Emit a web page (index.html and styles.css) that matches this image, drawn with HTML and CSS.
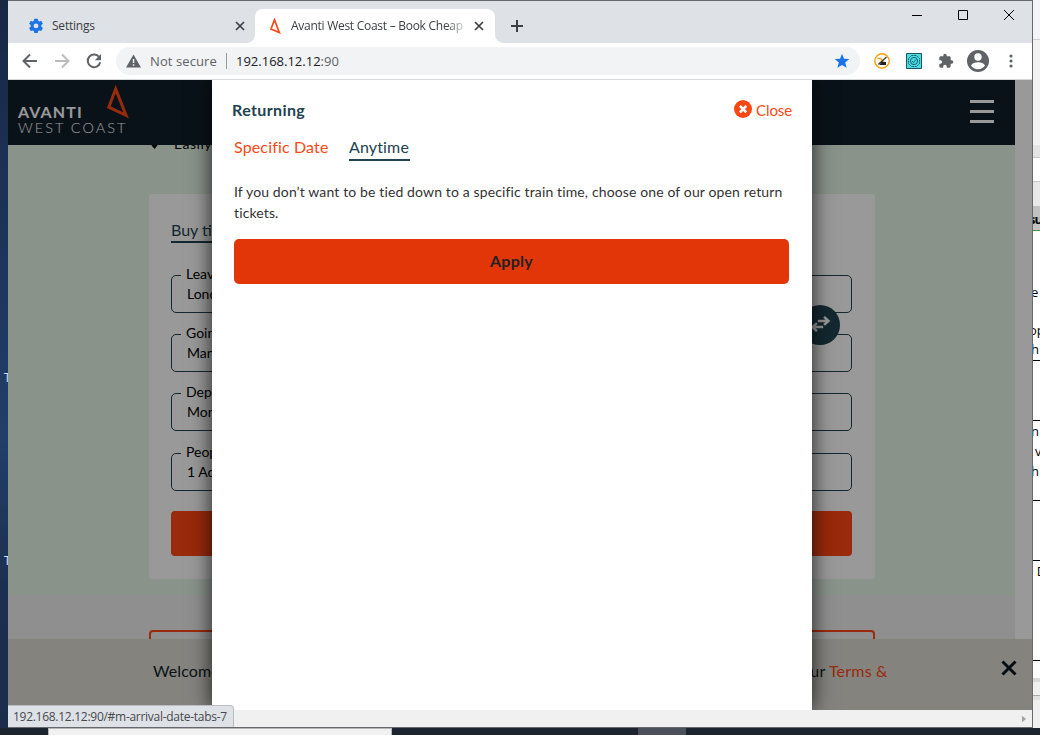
FILE: index.html
```
<!DOCTYPE html>
<html lang="en">
<head>
<meta charset="utf-8">
<title>Avanti West Coast – Book Cheap</title>
<link rel="stylesheet" href="styles.css">
</head>
<body>
<div class="desktop">
  <span class="shortcut shortcut-a">T</span>
  <span class="shortcut shortcut-b">T</span>

  <!-- Window partly visible behind the browser -->
  <div class="back-window">
    <div class="bw-title"></div>
    <div class="bw-tools"></div>
    <div class="bw-gap"></div>
    <div class="bw-field"></div>
    <div class="bw-ruler"></div>
    <div class="bw-head"><span>su</span></div>
    <div class="bw-doc">
      <div class="bw-row r1"><span class="w1">e</span><span class="w2">op</span><span class="w3">h</span></div>
      <div class="bw-row r2"></div>
      <div class="bw-row r3"><span class="w4">n</span><span class="w5">v</span><span class="w6">h</span></div>
      <div class="bw-row r4"></div>
      <div class="bw-row r5"><span class="w7">e D</span></div>
    </div>
    <div class="bw-scroll"></div>
    <div class="bw-status"></div>
  </div>

  <div class="taskbar"><div class="task-window"></div><div class="task-item"></div></div>

  <div class="browser">
    <div class="tabstrip">
      <div class="tab tab-idle">
        <svg class="favicon" viewBox="0 0 16 16"><path fill="#1a73e8" d="M6.300.7h3.400l.5 2.100 1 .6 2-.7 1.700 3-1.600 1.400v1.600l1.600 1.400-1.700 3-2-.7-1 .6-.5 2.100H6.300l-.5-2.100-1-.6-2 .7-1.700-3 1.600-1.400V7.100L1.100 5.700l1.700-3 2 .7 1-.6z"/><circle cx="8" cy="7.900" r="2.400" fill="#dee1e6"/></svg>
        <span class="tab-title t-settings">Settings</span>
        <svg class="tab-x" viewBox="0 0 10 10"><path d="M1 1l8 8M9 1L1 9"/></svg>
      </div>
      <div class="tab tab-active">
        <svg class="favicon" viewBox="0 0 16 16"><path d="M7.500 1.800L4 11l8.300 3.500z" fill="none" stroke="#ff4713" stroke-width="1.700"/></svg>
        <span class="tab-title t-avanti">Avanti West Coast – Book Cheap</span>
        <svg class="tab-x" viewBox="0 0 10 10"><path d="M1 1l8 8M9 1L1 9"/></svg>
      </div>
      <svg class="new-tab" viewBox="0 0 12 12"><path d="M6 0v12M0 6h12"/></svg>
      <div class="win-controls">
        <svg viewBox="0 0 10 10"><path d="M0 5.500h10"/></svg>
        <svg viewBox="0 0 10 10"><path d="M.5.5h9v9h-9z"/></svg>
        <svg viewBox="0 0 10 10"><path d="M0 0l10 10M10 0L0 10"/></svg>
      </div>
    </div>

    <div class="toolbar">
      <svg class="nav" viewBox="0 0 16 16"><path d="M15 8H2M8 1.500L1.500 8 8 14.500"/></svg>
      <svg class="nav nav-off" viewBox="0 0 16 16"><path d="M1 8h13M8 1.500L14.500 8 8 14.500"/></svg>
      <svg class="nav" viewBox="0 0 16 16"><path d="M13.400 4.500A6.300 6.300 0 1 0 14.200 9.200"/><path class="solid" d="M15 1v6.200H8.800z"/></svg>
      <div class="omnibox">
        <svg class="warn" viewBox="0 0 15 14"><path fill="#5f6368" d="M7.500.5L15 13.500H0z"/><path fill="#f1f3f4" d="M6.800 5h1.500v4H6.800zM6.800 10.200h1.500v1.500H6.800z"/></svg>
        <span class="insecure">Not secure</span>
        <span class="sep"></span>
        <span class="url">192.168.12.12<i>:90</i></span>
        <svg class="star" viewBox="0 0 16 16"><path fill="#1a73e8" d="M8 .8l2 5 5.300.3-4.100 3.400 1.400 5.200L8 11.900l-4.600 2.800 1.400-5.200L.7 6.100 6 5.800z"/></svg>
      </div>
      <svg class="ext e1" viewBox="0 0 16 16"><circle cx="8" cy="8" r="7.200" fill="#fff" stroke="#ff9f0a" stroke-width="1.400"/><path d="M3.500 5.500h3l2 2-4 3.500" fill="none" stroke="#f6a11a" stroke-width="1.600"/><path d="M7.500 8.500L12 9v3H5.500z" fill="#222"/><path d="M4.500 11.500l8-7.500" stroke="#333" stroke-width="1.100"/></svg>
      <svg class="ext e2" viewBox="0 0 16 16"><path d="M.5.500h15v15H.5z" fill="#46dbe0" stroke="#215660"/><g fill="none" stroke="#17656e"><path d="M5.500 2.500h5l3 3v5l-3 3h-5l-3-3v-5z" stroke-dasharray="2 .6"/><circle cx="8" cy="8" r="3.600"/><path d="M6 8l1.500 1.500L10 6.500"/></g></svg>
      <svg class="ext e3" viewBox="0 0 24 24"><path fill="#5f6368" d="M20.500 11H19V7c0-1.100-.9-2-2-2h-4V3.500a2.500 2.500 0 0 0-5 0V5H4c-1.100 0-2 .9-2 2v3.800h1.500a2.700 2.700 0 0 1 0 5.400H2V20c0 1.100.9 2 2 2h3.800v-1.500a2.700 2.700 0 0 1 5.400 0V22H17c1.100 0 2-.9 2-2v-4h1.500a2.500 2.500 0 0 0 0-5z"/></svg>
      <svg class="avatar" viewBox="0 0 22 22"><circle cx="11" cy="11" r="11" fill="#5f6368"/><circle cx="11" cy="7" r="3.700" fill="#fff"/><path fill="#fff" d="M4 15.500c1.200-2.300 4-3.300 7-3.300s5.800 1 7 3.300a8.300 8.300 0 0 1-14 0z"/></svg>
      <svg class="dots" viewBox="0 0 4 14"><circle cx="2" cy="2" r="1.600"/><circle cx="2" cy="7" r="1.600"/><circle cx="2" cy="12" r="1.600"/></svg>
    </div>

    <div class="viewport">
      <div class="site">
        <header class="site-head">
          <div class="brand">
            <div class="brand-text"><b>AVANTI</b><span>WEST COAST</span></div>
            <svg class="brand-mark" viewBox="0 0 22 34"><path d="M8.700 4L1.800 22.200 19 30.300z"/></svg>
          </div>
          <div class="burger"><i></i><i></i><i></i></div>
        </header>
        <main class="hero">
          <div class="usp"><svg viewBox="0 0 8 5"><path d="M0 0h8L4 5z"/></svg><span>Easily</span></div>
          <section class="card">
            <div class="buy">Buy tickets</div>
            <div class="field"><label>Leaving</label><p>London</p></div>
            <div class="field"><label>Going to</label><p>Manchester</p></div>
            <div class="field"><label>Departing</label><p>Monday</p></div>
            <div class="field last"><label>People</label><p>1 Adult</p></div>
            <div class="find"></div>
            <div class="swap"><svg viewBox="0 0 22 18"><path d="M8 5.500h12M15 1l5 4.500-5 4.500M14 12.500H2M7 8l-5 4.500L7 17"/></svg></div>
          </section>
        </main>
        <section class="more"><div class="promo"></div></section>
      </div>
      <div class="cookie"><span class="welcome">Welcome</span><span class="terms">our <a>Terms &amp;</a></span>
        <svg viewBox="0 0 16 16"><path d="M1.500 1.500l13 13M14.500 1.500l-13 13"/></svg></div>
      <div class="overlay"></div>
      <div class="modal">
        <div class="modal-top">
          <h2>Returning</h2>
          <div class="close"><svg viewBox="0 0 18 18"><circle cx="9" cy="9" r="9" fill="#ff4713"/><path d="M5.900 5.900l6.400 6.400M12.300 5.900l-6.400 6.400" stroke="#fff" stroke-width="2.600"/></svg><span>Close</span></div>
        </div>
        <nav class="modal-tabs"><a class="specific">Specific Date</a><a class="anytime">Anytime</a></nav>
        <p class="copy">If you don’t want to be tied down to a specific train time, choose one of our open return<br>tickets.</p>
        <button class="apply">Apply</button>
      </div>
    </div>
    <div class="hscroll"><svg viewBox="0 0 5 8"><path d="M0 0l5 4-5 4z"/></svg></div>
    <div class="status"><span>192.168.12.12:90/#m-arrival-date-tabs-7</span></div>
  </div>
</div>
</body>
</html>
```
FILE: styles.css
```
* { box-sizing: border-box; }
body { margin: 0; font-family: Lato, sans-serif; }
svg { display: block; flex: none; }
p, h2 { margin: 0; }
.desktop { position: relative; width: 1040px; height: 735px; overflow: hidden; background: linear-gradient(#182744 0, #1b3156 180px, #213f69 440px, #1b2f50 590px, #1b2d4b 735px); }

.shortcut { position: absolute; left: 4px; font: 12px/14px "Open Sans", sans-serif; color: #dbe7ff; text-shadow: 1px 1px 0 #10108a; }
.shortcut-a { top: 371px; }
.shortcut-b { top: 554px; }

/* Window behind */
.back-window { position: absolute; left: 1031px; top: 0; width: 300px; height: 728px; display: flex; flex-direction: column; background: #fff; font: 13px/16px "Open Sans", sans-serif; color: #000; }
.bw-title { height: 40px; background: #f3f4f9; border-bottom: 1px solid #d0d0d4; }
.bw-tools { height: 105px; background: #f3f3f3; }
.bw-gap { height: 13px; background: #e4e4e4; border-bottom: 1px solid #c6c6c6; }
.bw-field { height: 24px; border-bottom: 1px solid #c6c6c6; }
.bw-ruler { height: 24px; background: #e8e8e8; }
.bw-head { height: 25px; background: #c1c1c1; border-bottom: 1px solid #3d9c3d; padding-top: 5px; font-weight: 700; letter-spacing: -1px; }
.bw-head span { margin-left: -2px; }
.bw-doc { height: 447px; }
.bw-row { border-bottom: 1px solid #000; display: flex; flex-direction: column; }
.bw-row span { display: block; height: 20px; }
.r1 { height: 130px; padding-top: 53px; }
.bw-row .w1 { height: 40px; }
.w2 { margin-left: -2px; }
.r2 { height: 60px; }
.r3 { height: 80px; padding-top: 2px; }
.w5 { padding-left: 4px; }
.r4 { height: 60px; }
.r5 { height: 100px; padding-top: 2px; white-space: pre; }
.w7 { margin-left: -5px; }
.bw-scroll { height: 18px; background: #f0f0f0; border-top: 4px solid #d9d9d9; border-bottom: 1px solid #aaa; }
.bw-status { flex: 1; background: #f0f0f0; border-top: 4px solid #e0e0e0; }

.taskbar { position: absolute; left: 0; top: 728px; width: 1040px; height: 7px; display: flex; background: #1c2430; padding-left: 48px; gap: 246px; }
.task-window { width: 344px; background: #f1f1f1; border: solid #b7b7b7; border-width: 1px 1px 0; }
.task-item { width: 48px; background: #4b505a; }

/* Browser frame */
.browser { position: absolute; left: 8px; top: 0; width: 1025px; height: 728px; display: flex; flex-direction: column; border: solid #68696c; border-width: 1px 1px 1px 0; background: #fff; font-family: "Open Sans", sans-serif; }
.tabstrip { height: 42px; background: #dee1e6; display: flex; padding-top: 8px; }
.tab { height: 34px; display: flex; align-items: center; position: relative; }
.tab-idle { width: 247px; padding-left: 20px; }
.tab-active { width: 240px; padding-left: 12px; background: #fff; border-radius: 8px 8px 0 0; }
.tab-active::before, .tab-active::after { content: ""; position: absolute; bottom: 0; width: 8px; height: 8px; }
.tab-active::before { left: -8px; background: radial-gradient(circle at 0 0, #dee1e6 7.500px, #fff 8px); }
.tab-active::after { right: -8px; background: radial-gradient(circle at 100% 0, #dee1e6 7.500px, #fff 8px); }
.favicon { width: 16px; height: 16px; }
.tab-title { margin-left: 8px; padding-bottom: 1px; font-size: 12px; color: #3c4043; white-space: nowrap; overflow: hidden; }
.t-settings { width: 183px; letter-spacing: -.22px; }
.t-avanti { width: 174px; letter-spacing: -.27px; -webkit-mask-image: linear-gradient(90deg, #000 155px, transparent 178px); mask-image: linear-gradient(90deg, #000 155px, transparent 178px); }
.tab-x { width: 10px; height: 10px; fill: none; stroke: #3c4043; stroke-width: 1.700; }
.tab-active .tab-x { margin-left: 9px; }
.new-tab { width: 12px; height: 12px; margin: 11px 0 0 16px; fill: none; stroke: #3c4043; stroke-width: 2; }
.win-controls { margin: 1px 18px 0 auto; display: flex; gap: 36px; }
.win-controls svg { width: 10px; height: 10px; fill: none; stroke: #000; stroke-width: 1; overflow: visible; }
.toolbar { height: 37px; border-bottom: 1px solid #d7d8da; display: flex; align-items: center; padding-left: 14px; }
.nav { width: 16px; height: 16px; margin-right: 16px; fill: none; stroke: #5f6368; stroke-width: 2; }
.nav-off { stroke: #babcbe; }
.nav .solid { fill: #5f6368; stroke: none; }
.omnibox { width: 744px; height: 28px; margin-left: -2px; border-radius: 14px; background: #f1f3f4; display: flex; align-items: center; padding-left: 10px; white-space: nowrap; }
.warn { width: 15px; height: 14px; }
.insecure { width: 76px; margin-left: 9px; color: #5f6368; font-size: 13px; letter-spacing: .1px; }
.sep { width: 1px; height: 16px; background: #999c9f; }
.url { margin-left: 9px; color: #202124; font-size: 13px; }
.url i { font-style: normal; color: #5f6368; }
.star { width: 16px; height: 16px; margin: 0 10px 0 auto; }
.ext { width: 16px; height: 16px; }
.e1 { margin-left: 14px; }
.e2 { margin-left: 16px; }
.e3 { margin-left: 16px; }
.avatar { width: 22px; height: 22px; margin-left: 13px; }
.dots { width: 4px; height: 14px; margin-left: 20px; fill: #5f6368; }

/* Page */
.viewport { position: relative; height: 630px; overflow: hidden; font-family: Lato, sans-serif; font-size: 14px; }
.site { width: 1007px; height: 559px; overflow: hidden; }
.site-head { height: 65px; background: #121f2b; display: flex; justify-content: space-between; padding: 5px 21px 0 10px; }
.brand { display: flex; }
.brand-text { width: 89px; padding-top: 18px; display: flex; flex-direction: column; color: #fff; white-space: nowrap; }
.brand-text b { font-size: 16px; line-height: 18px; letter-spacing: 1.100px; }
.brand-text span { font-size: 14.500px; line-height: 14px; letter-spacing: 2px; font-weight: 300; }
.brand-mark { width: 22px; height: 34px; fill: none; stroke: #ff4713; stroke-width: 3; }
.burger { width: 24px; display: flex; flex-direction: column; gap: 7px; padding-top: 15px; }
.burger i { height: 3px; background: #fff; }
.hero { height: 450px; background: #e5f5e7; overflow: hidden; }
.usp { height: 49px; padding-left: 142px; display: flex; color: #000; font-size: 14px; }
.usp svg { width: 9px; height: 4px; }
.usp span { margin: -10px 0 0 15px; line-height: 18px; letter-spacing: .5px; }
.card { position: relative; width: 726px; height: 385px; margin-left: 141px; background: #fff; border-radius: 3px; padding: 26px 23px 0 22px; }
.buy { width: 90px; height: 23px; margin-bottom: 32px; border-bottom: 2px solid #214351; color: #214351; font-size: 16px; line-height: 19px; }
.field { height: 38px; margin-bottom: 21px; border: 1px solid #214351; border-radius: 5px; padding-left: 9px; color: #000; }
.field.last { margin: 22px 0 20px; }
.field label { display: block; width: 70px; margin-top: -12px; padding-left: 5px; background: #fff; font-size: 14px; line-height: 20px; }
.field p { padding-left: 6px; font-size: 14px; line-height: 20px; }
.find { height: 45px; background: #ff4713; border-radius: 4px; }
.swap { position: absolute; left: 651px; top: 111px; width: 40px; height: 40px; border-radius: 50%; background: #214351; display: flex; align-items: center; justify-content: center; padding-bottom: 3px; }
.swap svg { width: 21px; height: 16px; fill: none; stroke: #fff; stroke-width: 2.800; }
.more { height: 44px; background: #eee; padding: 35px 0 0 141px; overflow: hidden; }
.promo { width: 726px; height: 60px; border: 2px solid #ff4713; border-radius: 4px; }
.cookie { height: 71px; background: #dedbd3; display: flex; align-items: flex-start; color: #121f2b; font-size: 16px; line-height: 20px; padding: 22px 15px 0 145px; }
.welcome { width: 648px; letter-spacing: .1px; }
.terms { width: 92px; white-space: nowrap; letter-spacing: .2px; }
.terms a { color: #ff4713; }
.cookie svg { width: 16px; height: 16px; margin: -1px 0 0 auto; fill: none; stroke: #0a1620; stroke-width: 3; }
.overlay { position: absolute; inset: 0; background: rgba(0, 0, 0, .4); }

/* Dialog */
.modal { position: absolute; left: 204px; top: 0; width: 600px; height: 630px; background: #fff; box-shadow: 0 0 20px rgba(0, 0, 0, .8); padding: 20px 20px 0; }
.modal-top { display: flex; justify-content: space-between; height: 37px; color: #214351; }
.modal-top h2 { font-size: 16px; line-height: 20px; letter-spacing: .38px; }
.close { display: flex; gap: 4px; color: #ff4713; font-size: 15px; line-height: 20px; letter-spacing: -.1px; }
.close svg { width: 18px; height: 18px; }
.modal-tabs { display: flex; padding-left: 2px; height: 44px; font-size: 16px; line-height: 20px; color: #ff4713; }
.specific { width: 115px; letter-spacing: .15px; }
.anytime { width: 61px; height: 24px; border-bottom: 2px solid #214351; color: #214351; letter-spacing: .15px; }
.copy { padding-left: 2px; font-size: 14px; line-height: 21px; letter-spacing: .13px; color: #333; white-space: nowrap; height: 58px; }
.apply { display: block; margin-left: 2px; width: 555px; height: 45px; padding: 0 0 2px; border: 0; border-radius: 5px; background: #e33608; font: 700 16px Lato, sans-serif; letter-spacing: .3px; color: #222; }

.hscroll { height: 17px; background: #f0f0f0; display: flex; justify-content: flex-end; align-items: center; padding-right: 6px; }
.hscroll svg { width: 4px; height: 8px; fill: #a3a3a3; }
.status { position: absolute; left: 0; top: 704px; width: 226px; height: 22px; background: #dee1e6; border: solid #b9bcc1; border-width: 1px 1px 0 0; border-radius: 0 4px 0 0; padding-left: 5px; font-size: 12px; line-height: 21px; letter-spacing: -.28px; color: #46494d; white-space: nowrap; }
```
